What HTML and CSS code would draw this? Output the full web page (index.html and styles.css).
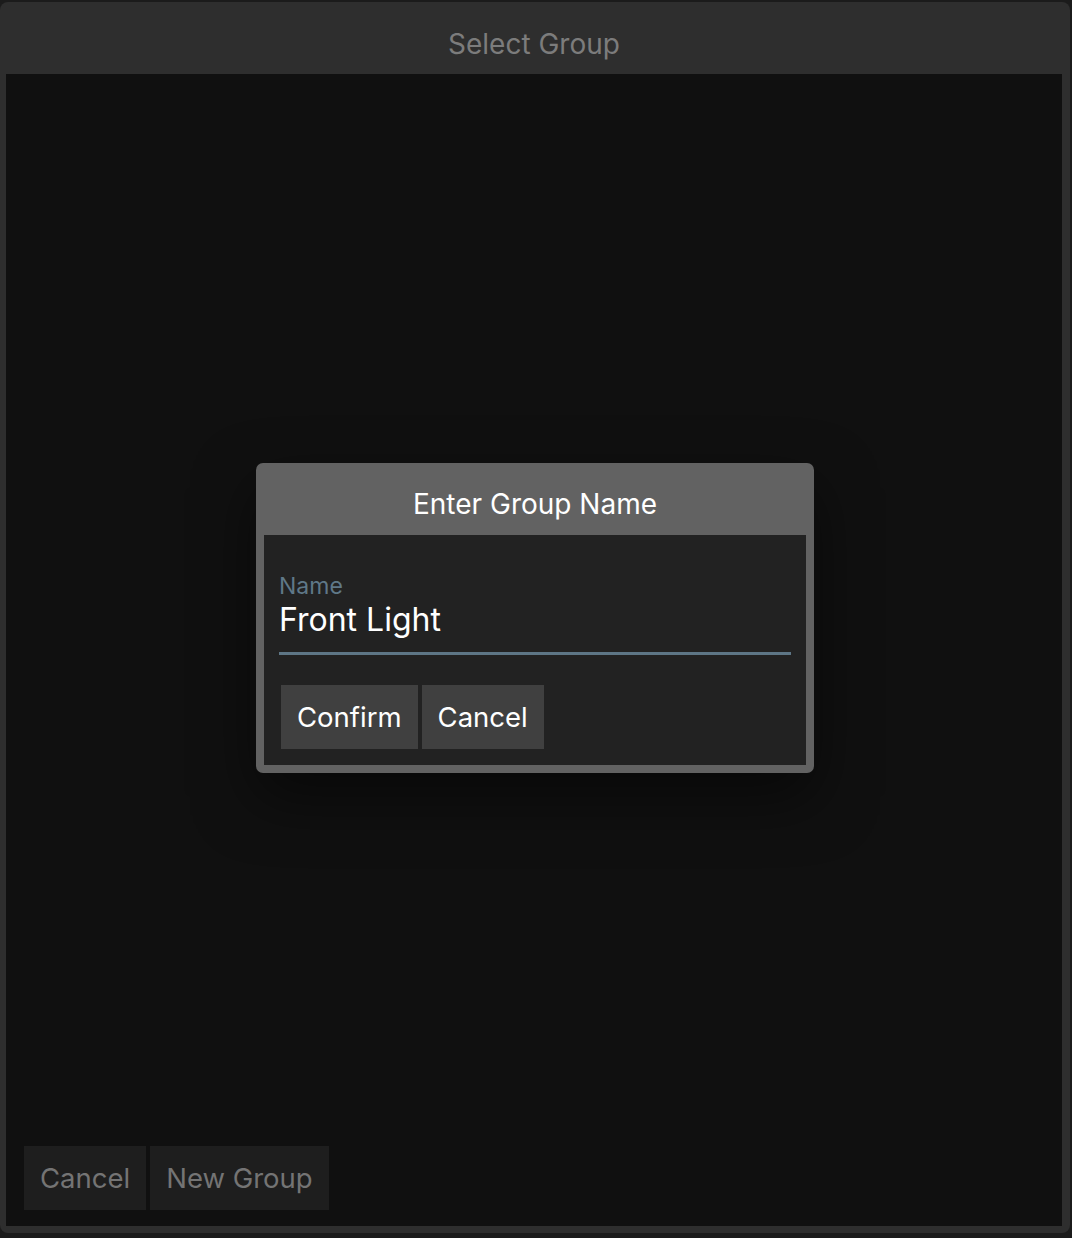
FILE: index.html
```html
<!DOCTYPE html>
<html>
<head>
<meta charset="utf-8">
<link rel="stylesheet" href="styles.css">
</head>
<body>
<div class="window">
  <div class="titlebar">Select Group</div>
  <div class="content">
    <div class="actions">
      <button class="btn btn-dim">Cancel</button>
      <button class="btn btn-dim">New Group</button>
    </div>
  </div>
  <div class="overlay">
    <div class="dialog">
      <div class="dialog-title">Enter Group Name</div>
      <div class="dialog-body">
        <div class="field">
          <div class="field-label">Name</div>
          <div class="field-value">Front Light</div>
        </div>
        <div class="dialog-actions">
          <button class="btn btn-lit">Confirm</button>
          <button class="btn btn-lit">Cancel</button>
        </div>
      </div>
    </div>
  </div>
</div>
</body>
</html>
```
FILE: styles.css
```css
html, body {
  margin: 0;
  padding: 0;
}
body {
  background: #1b1b1b;
  font-family: Inter, Roboto, "Liberation Sans", sans-serif;
  width: 1072px;
  height: 1238px;
  overflow: hidden;
}
.window {
  position: relative;
  box-sizing: border-box;
  margin: 2px 2px 0 0;
  height: 1231px;
  width: 1070px;
  background: #2e2e2e;
  border-radius: 8px;
  padding: 0 8px 7px 6px;
  display: flex;
  flex-direction: column;
}
.titlebar {
  height: 72px;
  flex: none;
  display: flex;
  align-items: center;
  justify-content: center;
  color: #7c7c7c;
  font-size: 28px;
  padding-top: 12px;
  box-sizing: border-box;
}
.content {
  flex: 1;
  background: #101010;
  display: flex;
  flex-direction: column;
  justify-content: flex-end;
  padding: 0 18px 16px 18px;
}
.actions {
  display: flex;
  gap: 4px;
}
.btn {
  font-family: inherit;
  border: none;
  height: 64px;
  font-size: 27.5px;
  padding: 0 16px;
  margin: 0;
  cursor: pointer;
}
.btn-dim {
  background: #1e1e1e;
  color: #747474;
}
.btn-lit {
  background: #404040;
  color: #ffffff;
}
.overlay {
  position: absolute;
  inset: 0;
  display: flex;
  align-items: center;
  justify-content: center;
}
.dialog {
  width: 558px;
  box-sizing: border-box;
  background: #626262;
  border-radius: 7px;
  padding: 0 8px 8px 8px;
  box-shadow: 0 24px 60px rgba(0, 0, 0, 0.5);
}
.dialog-title {
  height: 72px;
  display: flex;
  align-items: center;
  justify-content: center;
  color: #ffffff;
  font-size: 28px;
  padding-top: 10px;
  box-sizing: border-box;
}
.dialog-body {
  background: #222222;
  padding: 37px 15px 16px 15px;
}
.field {
  border-bottom: 3px solid #5e7686;
  padding-bottom: 13px;
}
.field-label {
  color: #5f7888;
  font-size: 23px;
  line-height: 28px;
}
.field-value {
  color: #ffffff;
  font-size: 32px;
  line-height: 39px;
}
.dialog-actions {
  display: flex;
  gap: 4px;
  margin-top: 30px;
  padding-left: 2px;
}
```
